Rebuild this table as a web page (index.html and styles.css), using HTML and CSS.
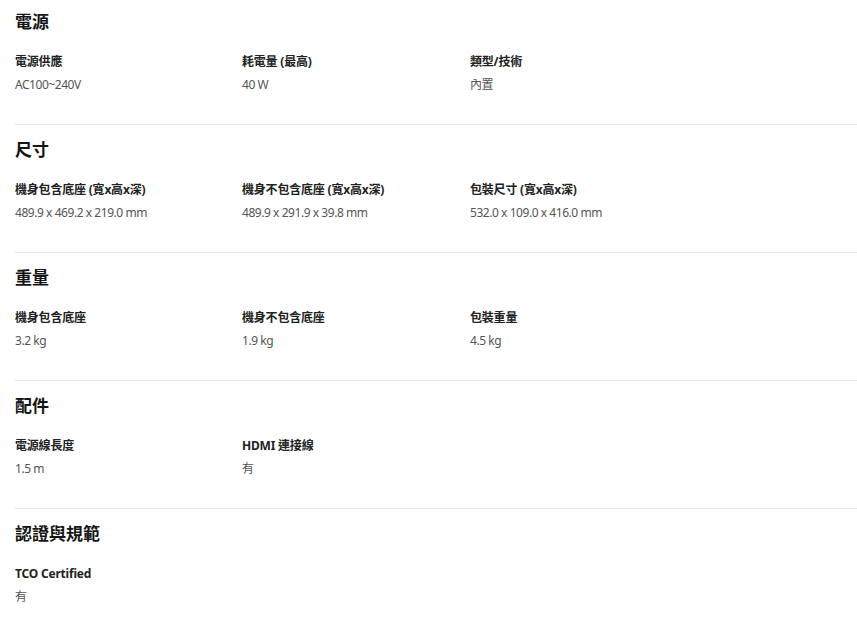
FILE: index.html
```html
<!DOCTYPE html>
<html lang="zh-Hant">

<head>
    <meta charset="UTF-8">
    <title>規格</title>
    <link rel="stylesheet" href="styles.css">
</head>

<body>
    <div class="specs">
        <div class="spec">
            <h3>電源</h3>
            <ul>
                <li><b>電源供應</b><span>AC100~240V</span></li>
                <li><b>耗電量 (最高)</b><span>40 W</span></li>
                <li><b>類型/技術</b><span>內置</span></li>
            </ul>
        </div>
        <div class="spec">
            <h3>尺寸</h3>
            <ul>
                <li><b>機身包含底座 (寬x高x深)</b><span>489.9 x 469.2 x 219.0 mm</span></li>
                <li><b>機身不包含底座 (寬x高x深)</b><span>489.9 x 291.9 x 39.8 mm</span></li>
                <li><b>包裝尺寸 (寬x高x深)</b><span>532.0 x 109.0 x 416.0 mm</span></li>
            </ul>
        </div>
        <div class="spec">
            <h3>重量</h3>
            <ul>
                <li><b>機身包含底座</b><span>3.2 kg</span></li>
                <li><b>機身不包含底座</b><span>1.9 kg</span></li>
                <li><b>包裝重量</b><span>4.5 kg</span></li>
            </ul>
        </div>
        <div class="spec">
            <h3>配件</h3>
            <ul>
                <li><b>電源線長度</b><span>1.5 m</span></li>
                <li><b>HDMI 連接線</b><span>有</span></li>
            </ul>
        </div>
        <div class="spec last">
            <h3>認證與規範</h3>
            <ul>
                <li><b>TCO Certified</b><span>有</span></li>
            </ul>
        </div>
    </div>
</body>

</html>
```

FILE: styles.css
```css
* {
    margin: 0;
    padding: 0;
}

ul {
    list-style: none;
}

body {
    background: #fff;
    font-family: "Noto Sans", "Noto Sans CJK TC", sans-serif;
    color: #1c1c1c;
}

.specs {
    padding-left: 15px;
}

.spec {
    padding: 13px 0 29px;
    border-bottom: 1px solid #e6e6e6;
}

.spec:first-child {
    padding-top: 10px;
}

.spec.last {
    border-bottom: 0;
}

.spec h3 {
    font-size: 17px;
    line-height: 24px;
    font-weight: 700;
    color: #151515;
    margin-bottom: 18px;
}

.spec ul {
    display: grid;
    grid-template-columns: 227px 228px 227px;
}

.spec li b {
    display: block;
    font-size: 12px;
    line-height: 20px;
    font-weight: 700;
    color: #222;
    letter-spacing: -0.2px;
}

.spec li span {
    display: block;
    margin-top: 3px;
    font-size: 12px;
    line-height: 20px;
    color: #555;
    letter-spacing: -0.45px;
}
```
